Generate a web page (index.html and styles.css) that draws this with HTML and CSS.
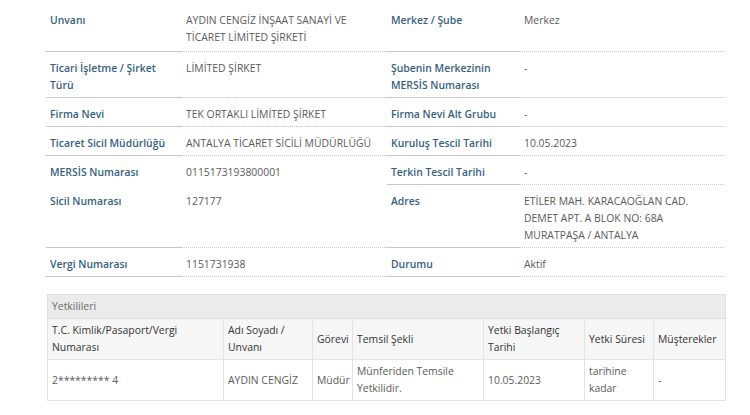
FILE: index.html
```html
<!DOCTYPE html>
<html lang="tr">
<head>
<meta charset="utf-8">
<link rel="stylesheet" href="styles.css">
</head>
<body>
<div class="page">
  <table class="info">
    <colgroup><col class="c1"><col class="c2"><col class="c3"><col class="c4"></colgroup>
    <tr class="first">
      <th>Unvanı</th><td>AYDIN CENGİZ İNŞAAT SANAYİ VE TİCARET LİMİTED ŞİRKETİ</td>
      <th>Merkez / Şube</th><td>Merkez</td>
    </tr>
    <tr>
      <th>Ticari İşletme / Şirket Türü</th><td>LİMİTED ŞİRKET</td>
      <th>Şubenin Merkezinin MERSİS Numarası</th><td>-</td>
    </tr>
    <tr>
      <th>Firma Nevi</th><td>TEK ORTAKLI LİMİTED ŞİRKET</td>
      <th>Firma Nevi Alt Grubu</th><td>-</td>
    </tr>
    <tr>
      <th>Ticaret Sicil Müdürlüğü</th><td>ANTALYA TİCARET SİCİLİ MÜDÜRLÜĞÜ</td>
      <th>Kuruluş Tescil Tarihi</th><td>10.05.2023</td>
    </tr>
    <tr>
      <th class="nob">MERSİS Numarası</th><td class="nob">0115173193800001</td>
      <th>Terkin Tescil Tarihi</th><td>-</td>
    </tr>
    <tr>
      <th>Sicil Numarası</th><td>127177</td>
      <th>Adres</th><td>ETİLER MAH. KARACAOĞLAN CAD. DEMET APT. A BLOK NO: 68A MURATPAŞA / ANTALYA</td>
    </tr>
    <tr>
      <th>Vergi Numarası</th><td>1151731938</td>
      <th>Durumu</th><td>Aktif</td>
    </tr>
  </table>

  <table class="auth">
    <colgroup>
      <col class="a1"><col class="a2"><col class="a3"><col class="a4"><col class="a5"><col class="a6"><col class="a7">
    </colgroup>
    <tr class="cap"><td colspan="7">Yetkilileri</td></tr>
    <tr class="head">
      <th>T.C. Kimlik/Pasaport/Vergi Numarası</th>
      <th>Adı Soyadı / Unvanı</th>
      <th>Görevi</th>
      <th>Temsil Şekli</th>
      <th>Yetki Başlangıç Tarihi</th>
      <th>Yetki Süresi</th>
      <th>Müşterekler</th>
    </tr>
    <tr class="row">
      <td>2********* 4</td>
      <td>AYDIN CENGİZ</td>
      <td>Müdür</td>
      <td>Münferiden Temsile Yetkilidir.</td>
      <td>10.05.2023</td>
      <td>tarihine kadar</td>
      <td>-</td>
    </tr>
  </table>
</div>
</body>
</html>
```

FILE: styles.css
```css
html, body {
  margin: 0;
  padding: 0;
  background: #ffffff;
}
body {
  font-family: "Open Sans", "Liberation Sans", sans-serif;
  font-size: 10.4px;
  line-height: 17px;
  color: #555555;
}
.page {
  padding: 4px 0 0 46px;
  width: 679px;
}
table {
  border-collapse: collapse;
  border-spacing: 0;
  table-layout: fixed;
  width: 679px;
}
.info .c1 { width: 136px; }
.info .c2 { width: 205px; }
.info .c3 { width: 133px; }
.info .c4 { width: 205px; }
.info th, .info td {
  vertical-align: top;
  text-align: left;
  padding: 8px 4px 3px 4px;
}
.info .first th, .info .first td {
  padding-bottom: 5px;
}
.info th {
  font-weight: 600;
  color: #365f80;
  border-bottom: 1px solid #c4c8cc;
}
.info td {
  font-weight: 400;
  color: #5a5a5a;
  border-bottom: 1px dotted #c8c8c8;
}
.info th.nob, .info td.nob {
  border-bottom-color: transparent;
}
.auth {
  margin-top: 17px;
  width: 678px;
  margin-left: 1px;
  border: 1px solid #e0e0e0;
}
.auth .a1 { width: 176px; }
.auth .a2 { width: 89px; }
.auth .a3 { width: 40px; }
.auth .a4 { width: 131px; }
.auth .a5 { width: 101px; }
.auth .a6 { width: 69px; }
.auth .a7 { width: 72px; }
.auth td, .auth th {
  padding: 3px 4px;
  vertical-align: middle;
  text-align: left;
}
.auth .cap td {
  background: #ebebeb;
  color: #6a6a6a;
  border-bottom: 1px solid #dcdcdc;
}
.auth .head th {
  font-weight: 400;
  background: #f6f6f6;
  color: #333333;
  border: 1px solid #e3e3e3;
}
.auth .row td {
  color: #5a5a5a;
  border: 1px solid #e3e3e3;
  background: #ffffff;
}
```
